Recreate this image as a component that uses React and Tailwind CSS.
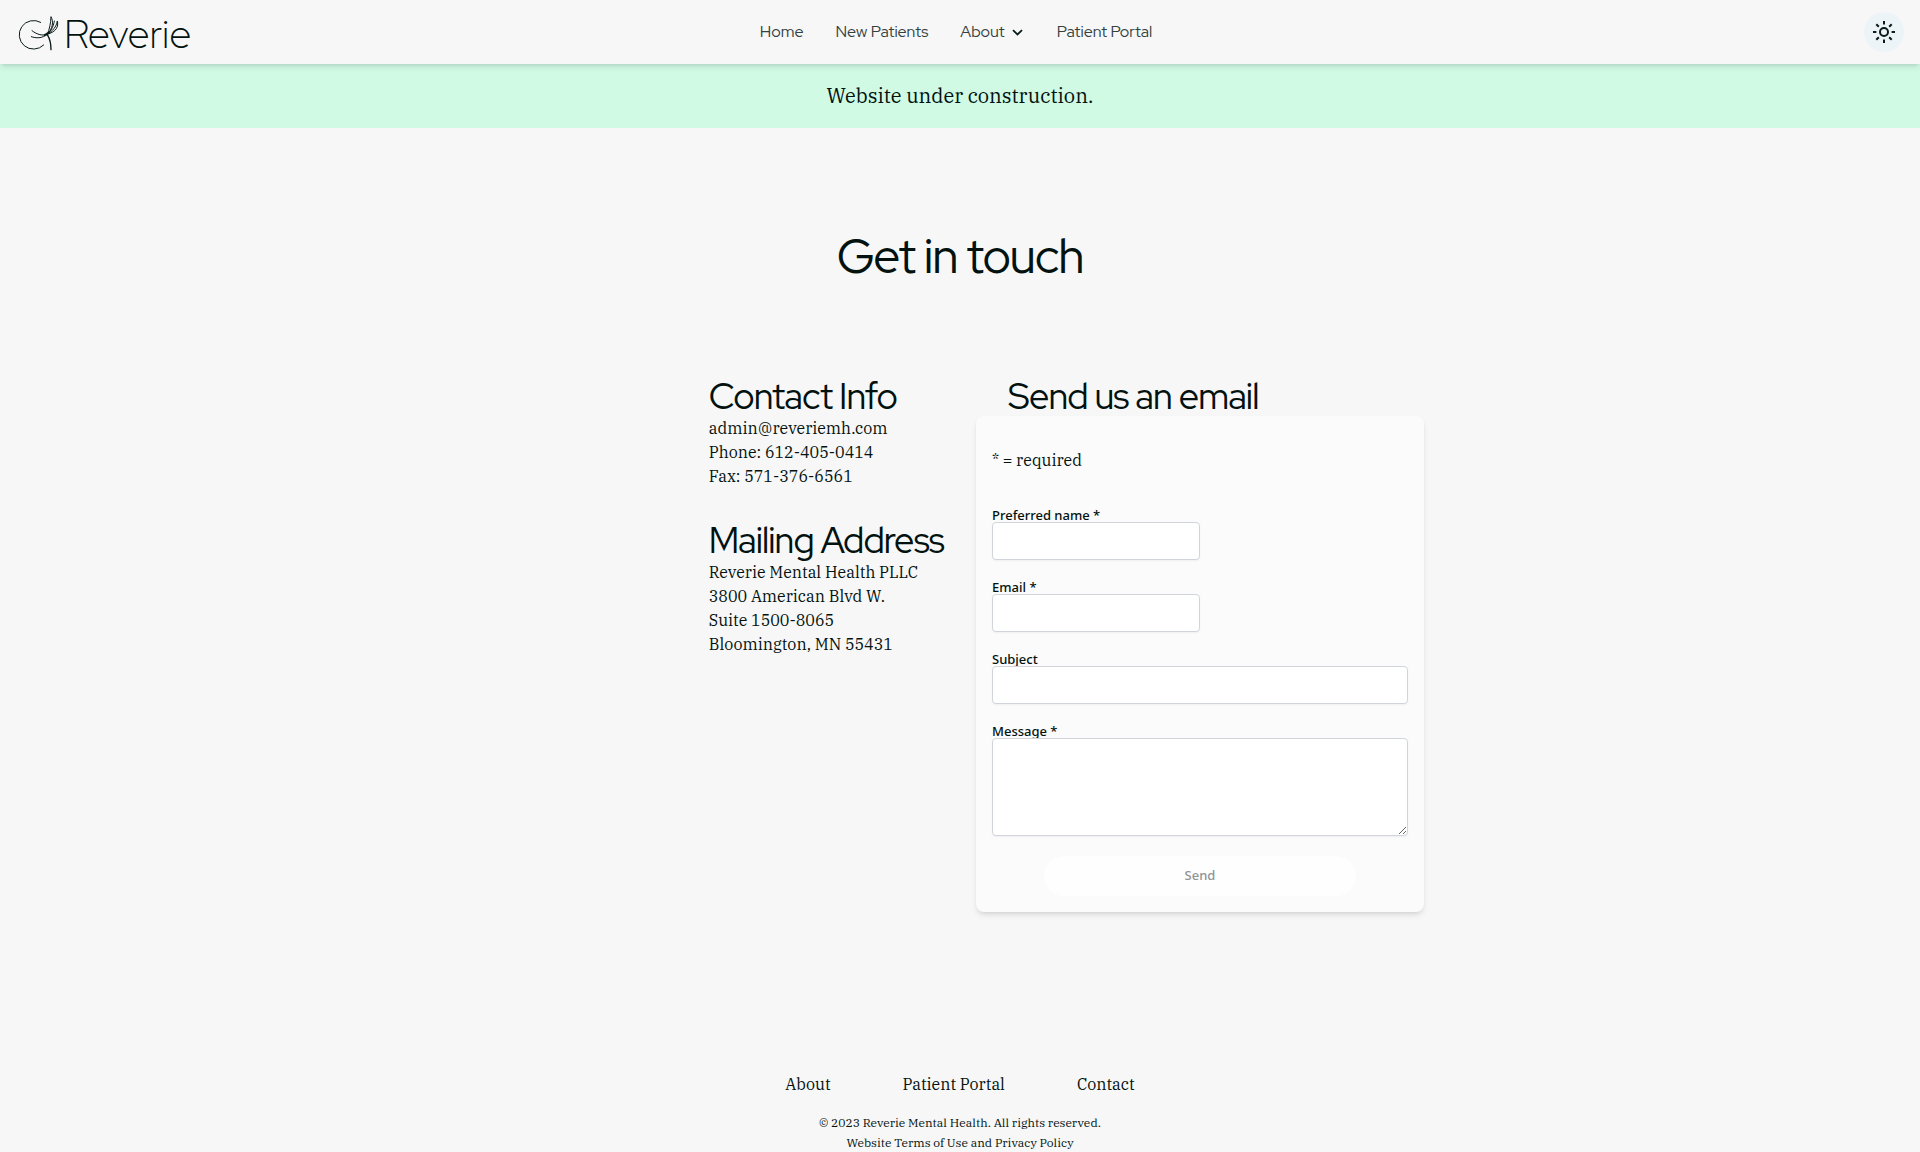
const display = "font-['Red_Hat_Display','Lato',sans-serif]"
const sans = "font-['Noto_Sans','Open_Sans',sans-serif]"

function LogoMark() {
  return (
    <svg viewBox="0 0 156 138" className="h-[46px] w-[52px]" fill="none" stroke="#0b1a1a" strokeWidth="3" strokeLinecap="round" aria-hidden="true">
      <path d="M86 40A43 43 0 1 0 95 108" />
      <path d="M106 77C114 90 117 106 117 122" strokeWidth="4" />
      <path d="M106 77C92 80 76 78 60 65" />
      <path d="M106 76C90 89 72 88 58 83" />
      <path d="M106 76C113 60 116 42 117 23C125 38 123 58 106 76Z" />
      <path d="M106 76C121 62 125 48 127 36" />
      <path d="M106 76C122 66 133 54 136 36C140 52 134 68 106 76Z" />
      <path d="M98 78L112 70" strokeWidth="6" />
    </svg>
  )
}

function SunIcon() {
  return (
    <svg viewBox="0 0 24 24" className="size-6" fill="none" stroke="#0b1a1a" strokeWidth="2" aria-hidden="true">
      <circle cx="12" cy="12" r="4" />
      <path d="M12 1v3.4M12 19.6V23M1 12h3.4M19.6 12H23M4.3 4.3l2.5 2.5M17.2 17.2l2.5 2.5M4.3 19.7l2.5-2.5M17.2 6.8l2.5-2.5" />
    </svg>
  )
}

function ChevronDown() {
  return (
    <svg viewBox="0 0 16 16" className="size-4" fill="none" stroke="#0b1a1a" strokeWidth="1.8" aria-hidden="true">
      <path d="M4 6.2L8.5 10.4L13 6.2" />
    </svg>
  )
}

function Header() {
  return (
    <header className="relative z-10 grid h-16 grid-cols-[1fr_auto_1fr] items-center bg-[#f7f7f7] px-3 shadow-md">
      <a href="#" className="flex items-center">
        <LogoMark />
        <span className={`${display} pt-1 text-[40px] leading-[46px] font-light`}>Reverie</span>
      </a>
      <nav className={`${display} mr-2 flex items-center gap-8 text-base text-[#34413f]`}>
        <a href="#">Home</a>
        <a href="#">New Patients</a>
        <button type="button" className="flex items-center gap-1">
          About
          <ChevronDown />
        </button>
        <a href="#">Patient Portal</a>
      </nav>
      <button type="button" aria-label="Toggle theme" className="mr-1 flex size-10 items-center justify-center justify-self-end rounded-full bg-[#edf4f7]">
        <SunIcon />
      </button>
    </header>
  )
}

function Field({ id, label, type = 'text', wide, multiline }) {
  const box = 'relative block rounded border border-[#d1d5db] bg-white px-3 shadow-xs outline-none'
  return (
    <div>
      <label htmlFor={id} className={`${sans} block text-[13px] leading-[14px] font-medium`}>
        {label}
      </label>
      {multiline ? (
        <textarea id={id} className={`${box} h-[98px] w-full resize`} />
      ) : (
        <input id={id} type={type} className={`${box} h-[38px] ${wide ? 'w-full' : 'w-1/2'}`} />
      )}
    </div>
  )
}

function ContactForm() {
  return (
    <form className="rounded-lg bg-[#fbfbfb] px-4 pt-8 pb-4 shadow-md" onSubmit={(e) => e.preventDefault()}>
      <p className="mb-9">* = required</p>
      <div className="flex flex-col gap-5">
        <Field id="name" label="Preferred name *" />
        <Field id="email" label="Email *" type="email" />
        <Field id="subject" label="Subject" wide />
        <Field id="message" label="Message *" multiline />
        <button type="submit" disabled className={`${sans} h-10 w-3/4 self-center rounded-full bg-[#fefefe] text-[13px] font-medium text-[#909494]`}>
          Send
        </button>
      </div>
    </form>
  )
}

function Heading({ children }) {
  return <h2 className={`${display} text-4xl leading-10 tracking-tight whitespace-nowrap`}>{children}</h2>
}

export default function App() {
  return (
    <div className="min-h-screen bg-[#f7f7f7] font-['IBM_Plex_Serif','Noto_Serif','Liberation_Serif',serif] text-base text-[#03120f]">
      <Header />
      <p className="bg-[#d1fae5] py-[18px] text-center text-xl leading-7">Website under construction.</p>
      <main>
        <h1 className={`${display} pt-26 text-center text-5xl leading-[48px] tracking-tight`}>Get in touch</h1>
        <div className="mx-auto mt-20 grid max-w-[960px] grid-cols-2">
          <div className="flex justify-end px-4 pt-4">
            <div>
              <Heading>Contact Info</Heading>
              <address className="mb-8 not-italic">
                admin@reveriemh.com<br />
                Phone: 612-405-0414<br />
                Fax: 571-376-6561
              </address>
              <Heading>Mailing Address</Heading>
              <address className="not-italic">
                Reverie Mental Health PLLC<br />
                3800 American Blvd W.<br />
                Suite 1500-8065<br />
                Bloomington, MN 55431
              </address>
            </div>
          </div>
          <div className="px-4 pt-4">
            <div className="pl-8">
              <Heading>Send us an email</Heading>
            </div>
            <ContactForm />
          </div>
        </div>
      </main>
      <footer className="mt-40 flex flex-col items-center">
        <nav className="flex gap-18">
          <a href="#">About</a>
          <a href="#">Patient Portal</a>
          <a href="#">Contact</a>
        </nav>
        <p className="mt-[17px] text-xs leading-5">© 2023 Reverie Mental Health. All rights reserved.</p>
        <p className="text-xs leading-5">
          <a href="#">Website Terms of Use and Privacy Policy</a>
        </p>
      </footer>
    </div>
  )
}
